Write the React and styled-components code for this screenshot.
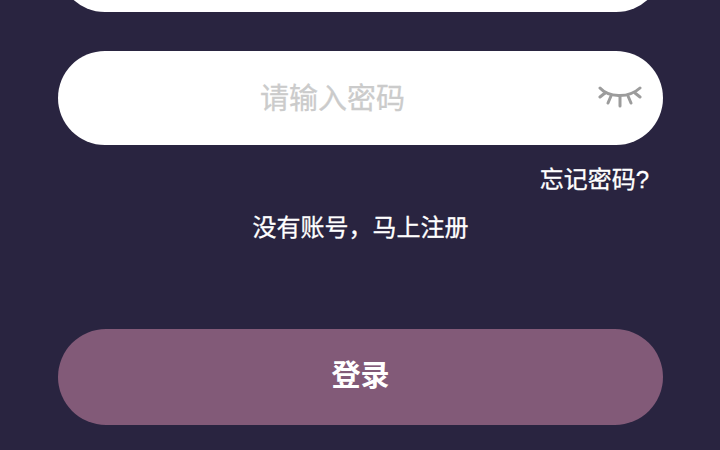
import React from 'react';
import styled, { createGlobalStyle } from 'styled-components';

const GlobalStyle = createGlobalStyle`
  html, body {
    margin: 0;
    padding: 0;
    height: 100%;
    overflow: hidden;
    background-color: #292440;
  }
`;

const Page = styled.div`
  width: 720px;
  height: 450px;
  overflow: hidden;
  box-sizing: border-box;
  padding: 0 57px 0 58px;
  background-color: #292440;
  font-family: "Liberation Sans", "Noto Sans CJK SC", sans-serif;
`;

const Form = styled.div`
  display: flex;
  flex-direction: column;
  margin-top: -82px;
`;

const Field = styled.div`
  display: flex;
  align-items: center;
  justify-content: center;
  position: relative;
  height: 94px;
  padding-right: 56px;
  border-radius: 47px;
  background-color: #fff;

  & + & {
    margin-top: 39px;
  }
`;

const Placeholder = styled.span`
  padding-top: 1px;
  font-size: 29px;
  line-height: 40px;
  color: #cbcbcb;
  -webkit-text-stroke: 0.3px #cbcbcb;
`;

const EyeButton = styled.span`
  position: absolute;
  right: 21px;
  top: 34px;
  display: block;
  width: 44px;
  height: 24px;
`;

const ForgotRow = styled.div`
  display: flex;
  justify-content: flex-end;
  padding: 20px 14px 0 0;
  font-size: 24px;
  line-height: 30px;
  color: #fff;
  -webkit-text-stroke: 0.3px #fff;
`;

const RegisterRow = styled.div`
  margin-top: 18px;
  text-align: center;
  font-size: 24px;
  line-height: 30px;
  color: #fff;
  -webkit-text-stroke: 0.3px #fff;
`;

const SubmitButton = styled.div`
  display: flex;
  align-items: center;
  justify-content: center;
  height: 96px;
  box-sizing: border-box;
  padding-bottom: 8px;
  margin-top: 86px;
  border-radius: 48px;
  background-color: #825a78;
  font-size: 29px;
  font-weight: 700;
  color: #fff;
`;

function ClosedEye() {
  return (
    <svg width="44" height="24" viewBox="0 0 44 24" fill="none" stroke="#9c9c9c" strokeWidth="3" strokeLinecap="round">
      <path d="M2 3 C10 12 30 14 42 3" />
      <path d="M7 8 L2 12" />
      <path d="M13 11 L10 18" />
      <path d="M22 12 L22 21" />
      <path d="M30 11 L33 18" />
      <path d="M37 8 L42 12" />
    </svg>
  );
}

export default function App() {
  return (
    <Page>
      <GlobalStyle />
      <Form>
        <Field />
        <Field>
          <Placeholder>请输入密码</Placeholder>
          <EyeButton>
            <ClosedEye />
          </EyeButton>
        </Field>
        <ForgotRow>忘记密码?</ForgotRow>
        <RegisterRow>没有账号，马上注册</RegisterRow>
        <SubmitButton>登录</SubmitButton>
      </Form>
    </Page>
  );
}
